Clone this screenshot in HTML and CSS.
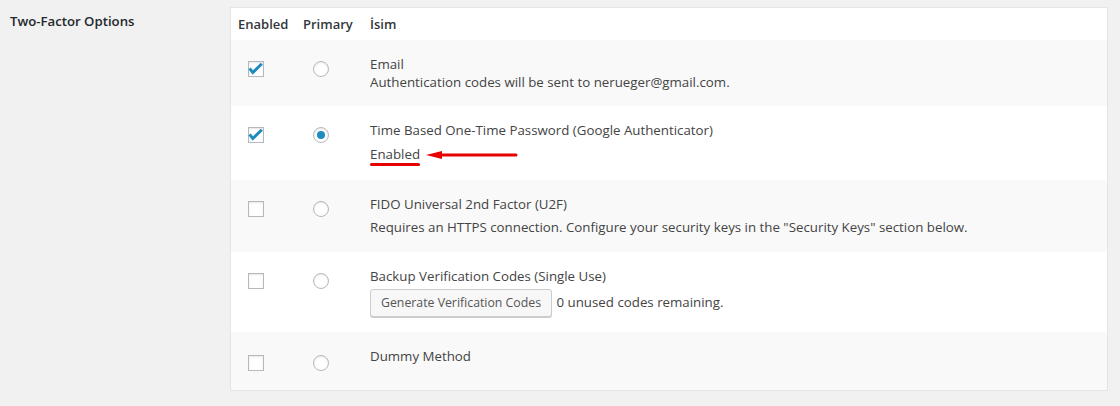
FILE: index.html
```html
<!DOCTYPE html>
<html lang="tr">
<head>
<meta charset="utf-8">
<title>Two-Factor Options</title>
<link rel="stylesheet" href="styles.css">
</head>
<body>
<div class="page">
  <div class="field-label">Two-Factor Options</div>
  <div class="methods">
    <div class="row row--head">
      <div class="cell">Enabled</div>
      <div class="cell">Primary</div>
      <div class="cell">İsim</div>
    </div>

    <div class="row row--alt row--email">
      <div class="cell cell--ctl"><span class="cb cb--on"><svg viewBox="0 0 16 16" width="16" height="16"><polyline points="1.6,7.4 4.8,11.6 13.8,2.8" fill="none" stroke="#1e8cbe" stroke-width="3"/></svg></span></div>
      <div class="cell cell--ctl"><span class="rb"></span></div>
      <div class="cell cell--text">
        <div class="title">Email</div>
        <div>Authentication codes will be sent to nerueger@gmail.com.</div>
      </div>
    </div>

    <div class="row row--totp">
      <div class="cell cell--ctl"><span class="cb cb--on"><svg viewBox="0 0 16 16" width="16" height="16"><polyline points="1.6,7.4 4.8,11.6 13.8,2.8" fill="none" stroke="#1e8cbe" stroke-width="3"/></svg></span></div>
      <div class="cell cell--ctl"><span class="rb rb--on"></span></div>
      <div class="cell cell--text">
        <div class="title">Time Based One-Time Password (Google Authenticator)</div>
        <p class="desc desc--totp"><span class="marked">Enabled<svg class="arrow" viewBox="0 0 92 10" width="92" height="10"><polygon points="0,5 16,1 16,9" fill="#e60000"/><line x1="14" y1="5" x2="90" y2="5" stroke="#e60000" stroke-width="3" stroke-linecap="round"/></svg></span></p>
      </div>
    </div>

    <div class="row row--alt row--fido">
      <div class="cell cell--ctl"><span class="cb"></span></div>
      <div class="cell cell--ctl"><span class="rb"></span></div>
      <div class="cell cell--text">
        <div class="title">FIDO Universal 2nd Factor (U2F)</div>
        <p class="desc desc--fido">Requires an HTTPS connection. Configure your security keys in the "Security Keys" section below.</p>
      </div>
    </div>

    <div class="row row--backup">
      <div class="cell cell--ctl"><span class="cb"></span></div>
      <div class="cell cell--ctl"><span class="rb"></span></div>
      <div class="cell cell--text">
        <div class="title">Backup Verification Codes (Single Use)</div>
        <p class="desc desc--backup"><span class="button">Generate Verification Codes</span> 0 unused codes remaining.</p>
      </div>
    </div>

    <div class="row row--alt row--dummy">
      <div class="cell cell--ctl"><span class="cb"></span></div>
      <div class="cell cell--ctl"><span class="rb"></span></div>
      <div class="cell cell--text">
        <div class="title">Dummy Method</div>
      </div>
    </div>
  </div>
</div>
</body>
</html>
```

FILE: styles.css
```css
html, body {
  margin: 0;
  padding: 0;
  background: #f1f1f1;
}
body {
  font-family: "Open Sans", "Noto Sans", sans-serif;
  font-size: 13.3px;
  line-height: 18px;
  color: #444;
}
.page {
  display: flex;
  align-items: flex-start;
  padding-right: 12px;
}
.field-label {
  width: 220px;
  padding: 12px 0 0 10px;
  font-size: 13.2px;
  font-weight: 600;
  color: #23282d;
}
.methods {
  flex: 1;
  margin-top: 7px;
  background: #fff;
  border: 1px solid #e5e5e5;
  box-shadow: 0 1px 1px rgba(0,0,0,.04);
}
.row {
  display: grid;
  grid-template-columns: 65px 67px 1fr;
  padding: 15px 0;
}
.row--alt { background: #f9f9f9; }
.row--head {
  padding: 7px 0;
  font-size: 13px;
  font-weight: 600;
  color: #32373c;
}
.cell { padding-left: 7px; }
.cell--ctl { padding-left: 17px; }
.cb, .rb {
  display: flex;
  align-items: center;
  justify-content: center;
  box-sizing: border-box;
  width: 16px;
  height: 16px;
  margin-top: 6px;
  border: 1px solid #b4b9be;
  background: #fff;
  box-shadow: inset 0 1px 2px rgba(0,0,0,.1);
}
.cb svg { display: block; margin: -1px; }
.rb { border-radius: 50%; }
.rb--on::before {
  content: "";
  width: 8px;
  height: 8px;
  border-radius: 50%;
  background: #1e8cbe;
}
.desc { margin: 0; }
.desc--totp { margin-top: 6px; }
.row--totp { padding-bottom: 17px; }
.desc--fido { margin-top: 5px; }
.row--fido { padding-bottom: 16px; }
.desc--backup { margin-top: 4px; }
.row--dummy { padding-bottom: 19px; }
.row--dummy .cb, .row--dummy .rb { margin-top: 8px; }
.marked {
  position: relative;
  display: inline-block;
}
.marked::after {
  content: "";
  position: absolute;
  left: 0;
  right: 0;
  top: 18px;
  height: 3px;
  border-radius: 2px;
  background: #e60000;
}
.arrow {
  position: absolute;
  left: calc(100% + 6px);
  top: 5px;
}
.button {
  display: inline-flex;
  align-items: center;
  box-sizing: border-box;
  height: 28px;
  padding: 0 10px 1px;
  margin-right: 1px;
  border: 1px solid #ccc;
  border-radius: 3px;
  background: #f7f7f7;
  box-shadow: 0 1px 0 #ccc;
  color: #555;
  font-size: 12.3px;
  vertical-align: middle;
}
```
